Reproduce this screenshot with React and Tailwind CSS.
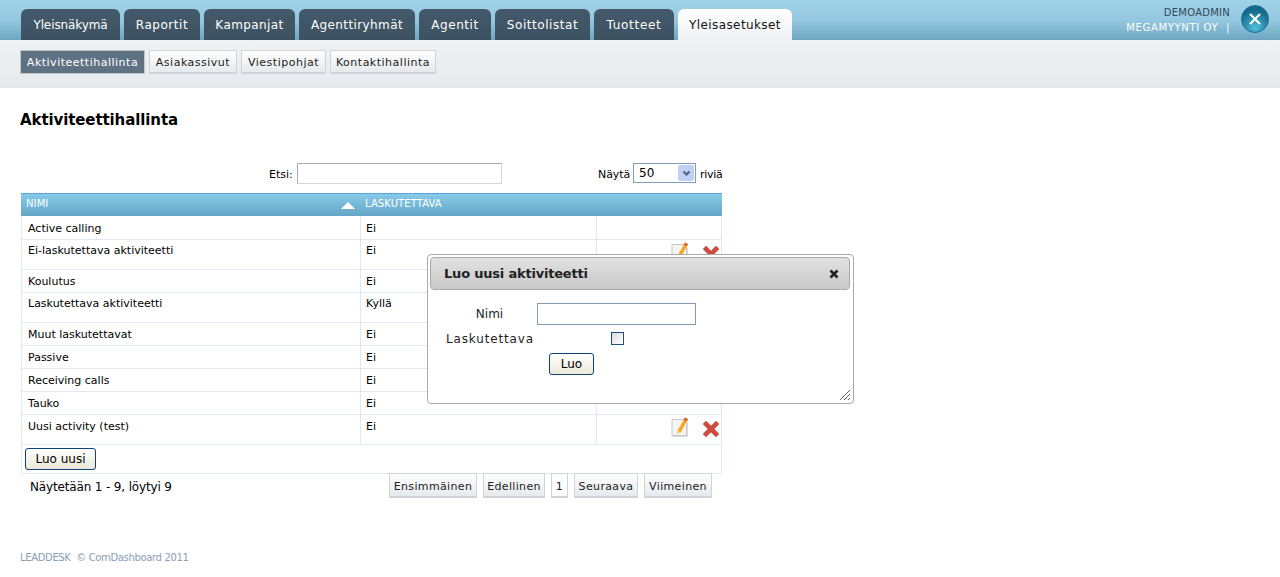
import React from 'react'

const font = "font-['DejaVu_Sans',sans-serif]"

const tabs = [
  { label: 'Yleisnäkymä', w: 'w-[99px]', track: 'tracking-[-0.1px]' },
  { label: 'Raportit', w: 'w-[76px]', track: 'tracking-[0.55px]' },
  { label: 'Kampanjat', w: 'w-[91px]', track: 'tracking-[0.4px]' },
  { label: 'Agenttiryhmät', w: 'w-[116px]', track: 'tracking-[0.4px]' },
  { label: 'Agentit', w: 'w-[72px]', track: 'tracking-[0.55px]' },
  { label: 'Soittolistat', w: 'w-[95px]', track: 'tracking-[0.55px]' },
  { label: 'Tuotteet', w: 'w-[80px]', track: 'tracking-[0.7px]' },
]

const subTabs = [
  { label: 'Asiakassivut', w: 'w-[88px]' },
  { label: 'Viestipohjat', w: 'w-[85px]' },
  { label: 'Kontaktihallinta', w: 'w-[106px]' },
]

const rows = [
  { name: 'Active calling', bill: 'Ei', h: 'h-[24px]', pt: 'pt-[6px]' },
  { name: 'Ei-laskutettava aktiviteetti', bill: 'Ei', h: 'h-[30px]', pt: 'pt-[4px]', icons: true },
  { name: 'Koulutus', bill: 'Ei', h: 'h-[23px]', pt: 'pt-[5px]' },
  { name: 'Laskutettava aktiviteetti', bill: 'Kyllä', h: 'h-[30px]', pt: 'pt-[4px]', icons: true },
  { name: 'Muut laskutettavat', bill: 'Ei', h: 'h-[23px]', pt: 'pt-[5px]' },
  { name: 'Passive', bill: 'Ei', h: 'h-[23px]', pt: 'pt-[5px]' },
  { name: 'Receiving calls', bill: 'Ei', h: 'h-[23px]', pt: 'pt-[5px]' },
  { name: 'Tauko', bill: 'Ei', h: 'h-[23px]', pt: 'pt-[5px]' },
  { name: 'Uusi activity (test)', bill: 'Ei', h: 'h-[30px]', pt: 'pt-[5px]', icons: true },
]

const pages = [
  { label: 'Ensimmäinen', w: 'w-[88px]' },
  { label: 'Edellinen', w: 'w-[62px]' },
  { label: '1', w: 'w-[17px]', plain: true },
  { label: 'Seuraava', w: 'w-[64px]' },
  { label: 'Viimeinen', w: 'w-[68px]' },
]

const EditIcon = () => (
  <svg width="18" height="20" viewBox="0 0 18 20" className="block">
    <path d="M2 3.5H13.5L16.5 6.5V19.5H2Z" fill="#b4b8c2" />
    <path d="M1 2.5H13L15.5 5V18.5H1Z" fill="#f6f5f0" stroke="#c4c7cf" strokeWidth="1" />
    <path d="M14 0.5L17 2.2L9.6 15.6L6.2 17L6.6 13.4Z" fill="#f7a823" />
    <path d="M14 0.5L17 2.2L15.8 4.4L12.8 2.6Z" fill="#e0602a" />
    <path d="M6.6 13.4L6.2 17L9.6 15.6Z" fill="#ecd9b4" />
  </svg>
)

const DeleteIcon = () => (
  <svg width="16" height="16" viewBox="0 0 16 16" className="block">
    <path d="M3 3L13 13M13 3L3 13" stroke="#d04a3e" strokeWidth="4.6" strokeLinecap="square" />
  </svg>
)

export default function App() {
  return (
    <div className={`${font} relative h-[577px] w-[1280px] overflow-hidden bg-white text-[11px] text-black`}>
      <header className="flex h-[40px] justify-between bg-gradient-to-b from-[#a0d2e8] via-[#95c8e0] to-[#6ea6c0] pl-[21px]">
        <nav className="flex items-end gap-[4px]">
          {tabs.map((t) => (
            <span key={t.label} className={`flex h-[31px] ${t.w} ${t.track} items-center justify-center rounded-t-[6px] bg-gradient-to-b from-[#44596a] to-[#3c5261] text-[12px] text-white`}>
              {t.label}
            </span>
          ))}
          <span className="flex h-[31px] w-[114px] items-center justify-center rounded-t-[6px] bg-gradient-to-b from-white to-[#eef2f5] text-[12px] tracking-[0.4px] text-[#111]">
            Yleisasetukset
          </span>
        </nav>
        <div className="flex items-start">
          <div className="mt-[5px] flex flex-col items-end text-[10px] leading-[15px]">
            <span className="tracking-[0.25px] text-[#33495a]">DEMOADMIN</span>
            <span className="tracking-[0.65px] text-white">MEGAMYYNTI OY&nbsp; |</span>
          </div>
          <span className="mt-[5px] ml-[11px] mr-[11px] flex h-[28px] w-[28px] items-center justify-center rounded-full border border-[#1d6d8e] bg-[radial-gradient(circle_at_50%_85%,#4fc0dc,#14688c_70%)]">
            <svg width="14" height="14" viewBox="0 0 14 14">
              <path d="M2 2L12 12M12 2L2 12" stroke="#fff" strokeWidth="2" />
            </svg>
          </span>
        </div>
      </header>

      <div className="flex h-[48px] items-start gap-[4px] bg-gradient-to-b from-[#eef2f5] to-[#e6eaed] pl-[20px] pt-[10px]">
        <span className="flex h-[24px] w-[125px] items-center justify-center border border-[#c4c8cc] bg-[#5f7283] pt-[2px] tracking-[0.5px] text-white">Aktiviteettihallinta</span>
        {subTabs.map((s) => (
          <span key={s.label} className={`flex h-[24px] ${s.w} items-center justify-center border border-b-2 border-[#d0d4d8] bg-gradient-to-b from-white to-[#e6eaed] pt-[3px] tracking-[0.5px] text-[#222]`}>
            {s.label}
          </span>
        ))}
      </div>

      <main className="px-[20px]">
        <h1 className="mt-[22px] text-[15px] font-bold leading-[20px] tracking-[-0.1px]">Aktiviteettihallinta</h1>

        <div className="mt-[33px] flex h-[21px] w-[702px] items-center">
          <span className="ml-[249px] w-[24px] shrink-0 pt-[4px]">Etsi:</span>
          <span className="ml-[4px] h-[21px] w-[205px] shrink-0 border border-[#d4d6d8] border-l-[#a5abb5] border-t-[#a5abb5] bg-white" />
          <span className="ml-[96px] w-[31px] shrink-0 pt-[4px] tracking-[-0.1px]">Näytä</span>
          <span className="ml-[4px] flex h-[20px] w-[63px] shrink-0 items-center justify-between self-start border border-[#7f9db9] pl-[5px] pr-px text-[12px]">
            50
            <span className="flex h-[16px] w-[16px] items-center justify-center rounded-[2px] bg-[#c0cff4]">
              <svg width="9" height="7" viewBox="0 0 9 7">
                <path d="M1.5 1.5L4.5 4.5L7.5 1.5" fill="none" stroke="#4d6185" strokeWidth="2" />
              </svg>
            </span>
          </span>
          <span className="ml-[4px] shrink-0 pt-[4px] tracking-[-0.3px]">riviä</span>
        </div>

        <div className="ml-px mt-[9px] w-[701px]">
          <div className="flex h-[23px] border-t border-[#5ca2e0] bg-gradient-to-b from-[#86cbe8] to-[#66a6c6] pb-[4px] text-[10px] tracking-[0.1px] text-white">
            <span className="relative flex w-[339px] items-center pl-[5px]">
              NIMI
              <span className="absolute right-[5px] top-[8px] h-0 w-0 border-x-[7px] border-b-[7px] border-x-transparent border-b-white" />
            </span>
            <span className="flex items-center pl-[5px]">LASKUTETTAVA</span>
          </div>
          {rows.map((r) => (
            <div key={r.name} className={`flex ${r.h} border-x border-b border-[#dfe8f5]`}>
              <span className={`w-[338px] pl-[6px] ${r.pt} leading-[13px]`}>{r.name}</span>
              <span className={`w-[236px] border-l border-[#dfe8f5] pl-[5px] ${r.pt} leading-[13px]`}>{r.bill}</span>
              <span className="flex flex-1 items-start gap-[14px] border-l border-[#dfe8f5] pl-[74px] pt-[2px]">
                {r.icons && (
                  <>
                    <EditIcon />
                    <span className="mt-[4px]"><DeleteIcon /></span>
                  </>
                )}
              </span>
            </div>
          ))}
          <div className="flex h-[29px] items-start border-x border-b border-[#dfe8f5] pl-[3px] pt-[3px]">
            <button className="h-[22px] w-[71px] rounded-[3px] border border-[#0a4478] bg-gradient-to-b from-white to-[#ece9d8] text-[12px] text-black">
              Luo uusi
            </button>
          </div>
          <div className="-mt-px flex h-[25px] items-start justify-between pl-[9px] pr-[10px]">
            <span className="mt-[7px] text-[12px] leading-[14px] tracking-[-0.15px]">Näytetään 1 - 9, löytyi 9</span>
            <div className="flex gap-[6px]">
              {pages.map((p) => (
                <span key={p.label} className={`flex h-[25px] ${p.w} items-center justify-center border border-b-2 border-[#d0d4d8] pt-[5px] tracking-[0.35px] text-[#222] ${p.plain ? 'bg-white' : 'bg-gradient-to-b from-white to-[#e6eaed]'}`}>
                  {p.label}
                </span>
              ))}
            </div>
          </div>
        </div>

        <p className="mt-[53px] text-[10px] leading-[14px] tracking-[-0.35px] text-[#8a9db5]">LEADDESK&nbsp; © ComDashboard 2011</p>
      </main>

      <section className="absolute left-[427px] top-[254px] h-[150px] w-[427px] rounded-[4px] border border-[#aaaaaa] bg-white py-[2px] pl-[2px] pr-[3px]">
        <div className="flex h-[33px] items-center justify-between rounded-[4px] border border-[#aaaaaa] bg-gradient-to-b from-[#e2e2e2] to-[#c8c8c8] pl-[13px] pr-[10px]">
          <span className="text-[13px] font-semibold tracking-[-0.2px] text-[#222]">Luo uusi aktiviteetti</span>
          <svg width="10" height="10" viewBox="0 0 10 10">
            <path d="M1.5 1.5L8.5 8.5M8.5 1.5L1.5 8.5" stroke="#222" strokeWidth="2.6" />
          </svg>
        </div>
        <div className="mt-[13px] grid grid-cols-[91px_auto] items-center gap-y-[7px] pl-[16px] text-[12px] text-[#222]">
          <span className="w-[87px] text-center">Nimi</span>
          <span className="h-[22px] w-[159px] border border-[#7f9db9] bg-white" />
          <span className="w-[87px] whitespace-nowrap text-center leading-[14px] tracking-[0.85px]">Laskutettava</span>
          <span className="ml-[74px] h-[13px] w-[13px] self-start border border-[#1c5180] bg-gradient-to-br from-[#dcdcd7] to-white" />
          <span />
          <button className="ml-[12px] h-[22px] w-[45px] rounded-[3px] border border-[#0a4478] bg-gradient-to-b from-white to-[#ece9d8] text-[12px] text-black">
            Luo
          </button>
        </div>
        <svg width="12" height="12" viewBox="0 0 12 12" className="absolute bottom-[2px] right-[2px]">
          <path d="M1 11L11 1M5 11L11 5M9 11L11 9" stroke="#666" strokeWidth="1" />
        </svg>
      </section>
    </div>
  )
}
